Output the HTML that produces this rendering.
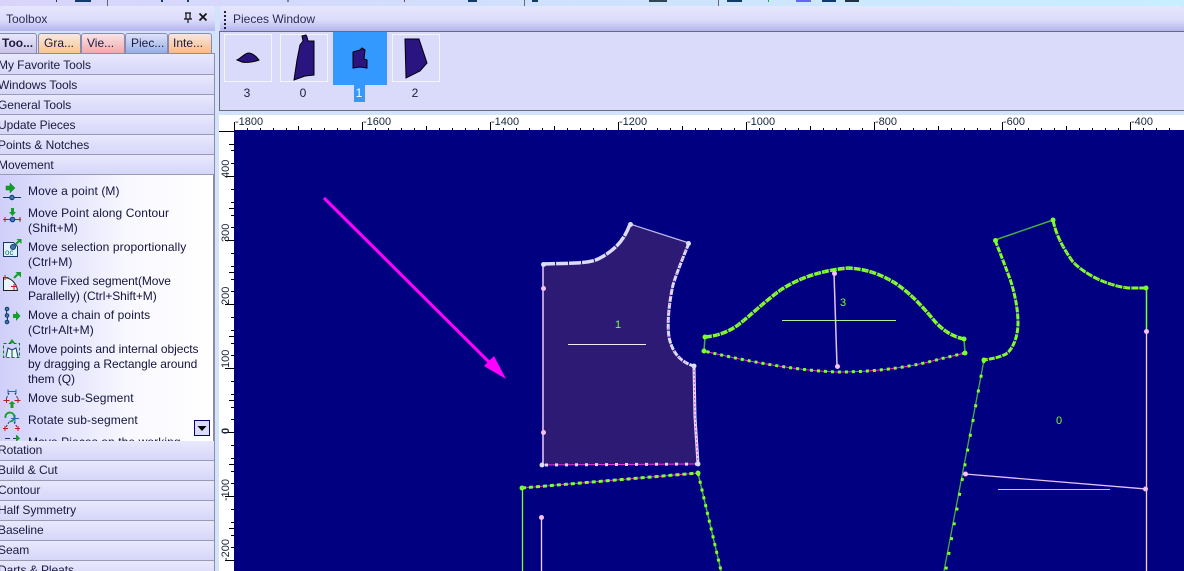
<!DOCTYPE html>
<html>
<head>
<meta charset="utf-8">
<style>
html,body{margin:0;padding:0;width:1184px;height:571px;overflow:hidden;background:#d3e3fb;}
body{position:relative;font-family:"Liberation Sans",sans-serif;font-size:12px;color:#1a1a40;}
.a{position:absolute;white-space:nowrap;}
#strip{left:0;top:0;width:1184px;height:6px;background:linear-gradient(90deg,#d9d3fb,#cfe2fd 50%,#c8eeff);}
.hd{background:linear-gradient(#e6e6fe,#dcdcfb 55%,#b4b4ee);height:25px;border-radius:3px 3px 0 0;}
.tab{top:33px;border:1px solid #8a8ab0;border-bottom:0;border-radius:3px 3px 0 0;line-height:19px;padding-left:5px;box-sizing:border-box;height:20px;}
.sec{left:-3px;width:217px;height:20px;box-sizing:border-box;padding-left:1px;line-height:21px;background:linear-gradient(#e8e8fe,#d6d6f8);border-bottom:1px solid #9a9ab4;overflow:hidden;letter-spacing:-0.05px;}
.low{line-height:19px;}
.it{left:28px;line-height:15px;color:#14143c;letter-spacing:0.1px;}
.pl{top:86px;line-height:15px;font-size:12px;text-align:center;}
.th{top:34px;width:46px;height:46px;border:1px solid #f4f4ff;}
</style>
</head>
<body>
<div class="a" id="strip"></div>
<svg class="a" style="left:0;top:0" width="1184" height="6">
<g fill="#123a6a">
<rect x="56" y="0" width="1" height="2"/><rect x="75" y="0" width="16" height="2"/><rect x="107" y="0" width="1" height="6" fill="#667"/><rect x="161" y="0" width="2" height="2"/><rect x="187" y="0" width="2" height="2"/><rect x="287" y="0" width="2" height="2" fill="#68a"/><rect x="404" y="0" width="1" height="2" fill="#843"/><rect x="468" y="0" width="9" height="2"/><rect x="524" y="0" width="1" height="6" fill="#667"/><rect x="532" y="0" width="6" height="2"/><rect x="649" y="0" width="18" height="2" fill="#345"/><rect x="718" y="0" width="1" height="6" fill="#667"/><rect x="727" y="0" width="15" height="2"/><rect x="768" y="0" width="1" height="2" fill="#2a2"/><rect x="796" y="0" width="15" height="2" fill="#66e"/><rect x="822" y="0" width="14" height="2"/><rect x="845" y="0" width="14" height="2" fill="#234"/>
</g>
</svg>

<!-- Toolbox -->
<div class="a" style="left:0;top:31px;width:215px;height:540px;background:#d3e3fb"></div>
<div class="a hd" style="left:0;top:6px;width:215px;"></div>
<div class="a" style="left:6px;top:12px;line-height:14px;color:#2a2a55">Toolbox</div>
<svg class="a" style="left:180px;top:10px" width="32" height="16">
<path d="M5 3h6M6 3v6M10 3v6M4 9h8M8 9v4" stroke="#111" stroke-width="1.2" fill="none"/>
<path d="M19.500 3.500l7 7M26.500 3.500l-7 7" stroke="#111" stroke-width="1.700" fill="none"/>
</svg>
<div class="a tab" style="left:-3px;top:33px;width:40px;background:linear-gradient(#e8e6fb,#c9c0e8);font-weight:bold;padding-left:4px;height:21px">Too...</div>
<div class="a tab" style="left:38px;width:43px;background:linear-gradient(#f8e8e0,#f9c58e)">Gra...</div>
<div class="a tab" style="left:81px;width:44px;background:linear-gradient(#f8e4e8,#f2a9a9)">Vie...</div>
<div class="a tab" style="left:125px;width:43px;background:linear-gradient(#dfe2fa,#94aee6);padding-left:5px">Piec...</div>
<div class="a tab" style="left:168px;width:44px;background:linear-gradient(#f8e6e0,#f9bb84);padding-left:4px">Inte...</div>
<div class="a" style="left:0;top:53px;width:215px;height:518px;background:#c9c9e4;border-top:1px solid #8c8ca6;border-right:2px solid #8c8ca6;box-sizing:border-box"></div>
<div class="a" style="left:0;top:175px;width:213px;height:266px;background:linear-gradient(90deg,#cfcffa,#f8f8ff 60%,#fff);overflow:hidden"></div>

<div class="a sec" style="top:54px;height:21px;line-height:23px">My Favorite Tools</div>
<div class="a sec" style="top:75px">Windows Tools</div>
<div class="a sec" style="top:95px">General Tools</div>
<div class="a sec" style="top:115px">Update Pieces</div>
<div class="a sec" style="top:135px">Points &amp; Notches</div>
<div class="a sec" style="top:155px">Movement</div>

<div class="a it" style="top:184px">Move a point (M)</div>
<div class="a it" style="top:206px">Move Point along Contour<br>(Shift+M)</div>
<div class="a it" style="top:240px">Move selection proportionally<br>(Ctrl+M)</div>
<div class="a it" style="top:274px;letter-spacing:-0.08px">Move Fixed segment(Move<br>Parallelly) (Ctrl+Shift+M)</div>
<div class="a it" style="top:308px">Move a chain of points<br>(Ctrl+Alt+M)</div>
<div class="a it" style="top:342px;letter-spacing:-0.05px">Move points and internal objects<br>by dragging a Rectangle around<br>them (Q)</div>
<div class="a it" style="top:391px">Move sub-Segment</div>
<div class="a it" style="top:413px">Rotate sub-segment</div>
<div class="a it" style="top:435px;height:6px;overflow:hidden">Move Pieces on the working</div>

<svg class="a" style="left:0;top:175px" width="28" height="266">
<!-- move a point -->
<path d="M6 11h4V8l5 5-5 5v-3H6z" fill="#12a028" stroke="#0a7a1a" stroke-width=".5"/>
<path d="M3 22.500h18" stroke="#123a6a"/><circle cx="12" cy="22.500" r="2.200" fill="#3878b8" stroke="#123a6a"/>
<!-- along contour -->
<path d="M11 33h3v4h2l-3.500 4-3.500-4h2z" fill="#12a028"/>
<path d="M3 44.500h18M5 42v5M20 42v5" stroke="#c01818"/><circle cx="12.500" cy="44.500" r="2.300" fill="#3878b8" stroke="#123a6a"/>
<!-- proportional -->
<path d="M3.500 67.500h10l4 4v10h-14z" fill="#e4f0fc" stroke="#123a6a"/>
<circle cx="13" cy="72" r="2.500" fill="#3878b8" stroke="#123a6a"/><path d="M16 69l3-3" stroke="#12a028" stroke-width="2"/><path d="M16.500 64h5v5z" fill="#12a028"/>
<text x="5" y="80" font-family="Liberation Sans" font-size="8" fill="#0a7a6a">oc</text>
<!-- fixed -->
<path d="M3.500 102.500c7 0 13 5 14 13h-14z" fill="#eef4fc" stroke="#222"/><path d="M3.500 102.500h5M5 100v5M11 111.500h6M14 109v6" stroke="#c01818"/>
<path d="M14 103l4-4" stroke="#12a028" stroke-width="2"/><path d="M15.500 97h5.500v5.500z" fill="#12a028"/>
<!-- chain -->
<path d="M7 134c-2 5 2 9 0 13" stroke="#123a6a" fill="none"/>
<circle cx="7" cy="134" r="1.800" fill="#3878b8" stroke="#123a6a"/><circle cx="7" cy="140.500" r="1.800" fill="#3878b8" stroke="#123a6a"/><circle cx="7" cy="147" r="1.800" fill="#3878b8" stroke="#123a6a"/>
<path d="M13 139h3v-3l4.500 5-4.500 5v-3h-3z" fill="#12a028"/>
<!-- rectangle -->
<rect x="3.500" y="168.500" width="16" height="14" fill="none" stroke="#0a7a1a" stroke-dasharray="3 2"/>
<path d="M6 182l2-9 4 2 4-2 2 9M12 175v7" fill="#eef4fc" stroke="#123a6a"/><path d="M12 164l3 4h-6z" fill="#12a028"/>
<!-- sub segment -->
<path d="M8 216.500h8M8 214.500v4M16 214.500v4" stroke="#1a6ad0"/>
<path d="M3.500 225.500h6M6.500 223v5M14.500 225.500h6M18 223v5" stroke="#c01818"/>
<path d="M9 218l-3 6M15 218l3 6" stroke="#123a6a" stroke-dasharray="2 1.500"/>
<path d="M12 226l3.500 3h-2v4h-3v-4h-2z" fill="#12a028"/>
<!-- rotate -->
<path d="M5.500 243a4.500 4.500 0 1 1 4 3.500" fill="none" stroke="#12a028" stroke-width="1.800"/>
<path d="M15 240v8M11 243.500h8" stroke="#1a6ad0"/>
<path d="M3 253.500h5M5 251v5M15 253.500h5M18 251v5" stroke="#c01818"/>
<path d="M9 247l-3 5M14 247l3 5" stroke="#123a6a" stroke-dasharray="2 1.500"/>
<path d="M5 263.500h5M13 263.500h3" stroke="#123a6a"/><path d="M16 260h1l3 3.500-3 2.500h-1z" fill="#12a028"/>
</svg>
<div class="a" style="left:194px;top:420px;width:14px;height:14px;border:1px solid #000080;background:#dcdcfa"></div>
<svg class="a" style="left:194px;top:420px" width="16" height="16"><path d="M3.500 6h9l-4.500 5z" fill="#000"/></svg>

<div class="a sec low" style="top:441px">Rotation</div>
<div class="a sec low" style="top:461px">Build &amp; Cut</div>
<div class="a sec low" style="top:481px">Contour</div>
<div class="a sec low" style="top:501px">Half Symmetry</div>
<div class="a sec low" style="top:521px">Baseline</div>
<div class="a sec low" style="top:541px">Seam</div>
<div class="a sec low" style="top:561px">Darts &amp; Pleats</div>

<!-- Pieces window -->
<div class="a hd" style="left:220px;top:6px;width:964px;"></div>
<svg class="a" style="left:224px;top:11px" width="3" height="18"><g fill="#223"><rect x="0" y="0" width="2" height="2"/><rect x="0" y="4" width="2" height="2"/><rect x="0" y="8" width="2" height="2"/><rect x="0" y="12" width="2" height="2"/><rect x="0" y="16" width="2" height="2"/></g></svg>
<div class="a" style="left:233px;top:12px;line-height:14px;color:#2a2a55">Pieces Window</div>
<div class="a" style="left:219px;top:31px;width:965px;height:80px;box-sizing:border-box;background:#dadafa;border:1px solid #6c6c78;border-right:0"></div>
<div class="a th" style="left:224px"></div>
<div class="a th" style="left:280px"></div>
<div class="a" style="left:333px;top:32px;width:54px;height:53px;background:#3399ff"></div>
<div class="a th" style="left:392px"></div>
<div class="a" style="left:354px;top:85px;width:11px;height:17px;background:#3399ff"></div>
<div class="a pl" style="left:232px;width:30px">3</div>
<div class="a pl" style="left:288px;width:30px">0</div>
<div class="a pl" style="left:344px;width:30px;color:#fff">1</div>
<div class="a pl" style="left:400px;width:30px">2</div>
<svg class="a" style="left:219px;top:31px;overflow:visible" width="230" height="60">
<g transform="translate(-219,-31)" fill="#2a1480" stroke="#000" stroke-width="1">
<path d="M237 60C241 58 244 54 248 53 252 53 256 56 259 60 254 62 246 63 242 62z"/>
<path d="M302 36L306 35 307 37 308 41 314 41 314 75 305 76 294 80 297 60 300 45 303 41z"/>
<path d="M353 52L360 50 362 48 365 50 364 59 367 60 367 68 360 67 353 68z"/>
<path d="M405 39L419 39 427 63 420 71 406 78z"/>
</g>
</svg>

<!-- rulers + canvas -->
<div class="a" style="left:219px;top:115px;width:965px;height:456px;background:#fff"></div>
<div class="a" style="left:234px;top:130px;width:950px;height:441px;background:#000080"></div>
<div class="a" style="left:234px;top:115px;width:950px;font-size:11px;line-height:14px;color:#16243c;height:14px">
<span class="a" style="left:1px">-1800</span><span class="a" style="left:129px">-1600</span><span class="a" style="left:257px">-1400</span><span class="a" style="left:385px">-1200</span><span class="a" style="left:513px">-1000</span><span class="a" style="left:641px">-800</span><span class="a" style="left:769px">-600</span><span class="a" style="left:897px">-400</span>
</div>
<svg class="a" style="left:219px;top:115px" width="965" height="456">
<path stroke="#000" stroke-width="1" fill="none" d="M15.500 7V15M143.500 7V15M271.500 7V15M399.500 7V15M527.500 7V15M655.500 7V15M783.500 7V15M911.500 7V15M79.500 11V15M207.500 11V15M335.500 11V15M463.500 11V15M591.500 11V15M719.500 11V15M847.500 11V15M28.500 13V15M41.500 13V15M54.500 13V15M67.500 13V15M92.500 13V15M105.500 13V15M118.500 13V15M131.500 13V15M156.500 13V15M169.500 13V15M182.500 13V15M195.500 13V15M220.500 13V15M233.500 13V15M246.500 13V15M259.500 13V15M284.500 13V15M297.500 13V15M310.500 13V15M323.500 13V15M348.500 13V15M361.500 13V15M374.500 13V15M387.500 13V15M412.500 13V15M425.500 13V15M438.500 13V15M451.500 13V15M476.500 13V15M489.500 13V15M502.500 13V15M515.500 13V15M540.500 13V15M553.500 13V15M566.500 13V15M579.500 13V15M604.500 13V15M617.500 13V15M630.500 13V15M643.500 13V15M668.500 13V15M681.500 13V15M694.500 13V15M707.500 13V15M732.500 13V15M745.500 13V15M758.500 13V15M771.500 13V15M796.500 13V15M809.500 13V15M822.500 13V15M835.500 13V15M860.500 13V15M873.500 13V15M886.500 13V15M899.500 13V15M924.500 13V15M937.500 13V15M950.500 13V15"/>
<path stroke="#000" fill="none" d="M0 16.500H15M6 61.500H15M6 125.500H15M6 189.500H15M6 253.500H15M6 317.500H15M6 381.500H15M6 445.500H15M10 29.500H15M10 93.500H15M10 157.500H15M10 221.500H15M10 285.500H15M10 349.500H15M10 413.500H15M12 35.500H15M12 48.500H15M12 74.500H15M12 87.500H15M12 100.500H15M12 112.500H15M12 138.500H15M12 151.500H15M12 164.500H15M12 176.500H15M12 202.500H15M12 215.500H15M12 228.500H15M12 240.500H15M12 266.500H15M12 279.500H15M12 292.500H15M12 304.500H15M12 330.500H15M12 343.500H15M12 356.500H15M12 368.500H15M12 394.500H15M12 407.500H15M12 420.500H15M12 432.500H15"/>
<g font-family="Liberation Sans" font-size="11" fill="#16243c">
<text transform="translate(10,63) rotate(-90)">400</text>
<text transform="translate(10,127) rotate(-90)">300</text>
<text transform="translate(10,190) rotate(-90)">200</text>
<text transform="translate(10,253) rotate(-90)">100</text>
<text transform="translate(10,319) rotate(-90)" font-weight="bold">0</text>
<text transform="translate(10,386) rotate(-90)">-100</text>
<text transform="translate(10,446) rotate(-90)">-200</text>
</g>
</svg>

<!-- Drawing -->
<svg class="a" style="left:0;top:0" width="1184" height="571">
<defs><clipPath id="c"><rect x="234" y="130" width="950" height="441"/></clipPath></defs>
<g clip-path="url(#c)" fill="none" stroke-linecap="butt" stroke-linejoin="round">
<!-- arrow -->
<path d="M324 198L498 371" stroke="#ff00ff" stroke-width="3"/>
<path d="M506 379L484 366 494 356z" fill="#ff00ff"/>

<!-- piece 1 -->
<path d="M543 264C570 263 590 264 600 258 617 249 625 238 630 224L689 243C682 260 676 275 673 285 669 303 667 323 669 337 672 352 680 362 694 366L695 417 698 464 542 465z" fill="#2d1a75"/>
<path d="M543 264C570 263 590 264 600 258 617 249 625 238 630 224" stroke="#dcdcf6" stroke-width="3.500" stroke-dasharray="12 1"/>
<path d="M689 243C682 260 676 275 673 285 669 303 667 323 669 337 672 352 680 362 694 366" stroke="#dcdcf6" stroke-width="3" stroke-dasharray="6 1"/>
<path d="M694 366L695 417 698 464" stroke="#dcdcf6" stroke-width="3"/>
<path d="M698 464L542 465" stroke="#ff33ee" stroke-width="1"/>
<path d="M698 464L542 465" stroke="#dcdcf6" stroke-width="3" stroke-dasharray="3 7"/>
<path d="M689 243C682 260 676 275 673 285 669 303 667 323 669 337 672 352 680 362 694 366" stroke="#ff33ee" stroke-width="1" stroke-dasharray="1 7"/>
<path d="M694 366L695 417 698 464" stroke="#ff33ee" stroke-width="1" stroke-dasharray="2 2"/>
<path d="M630 224L689 243" stroke="#bbbbee" stroke-width="1.200"/>
<path d="M543 264V465" stroke="#eec8f4" stroke-width="1.500"/>
<path d="M568 344.500H646" stroke="#f4e8fa" stroke-width="1"/>
<g fill="#dcdcf6"><circle cx="543.500" cy="264.500" r="2.500"/><circle cx="630.500" cy="224.500" r="2.500"/><circle cx="688.500" cy="243.500" r="2.500"/><circle cx="694" cy="366" r="2.500"/><circle cx="698" cy="464" r="2.500"/><circle cx="542" cy="465" r="2.500"/></g>
<g fill="#f8c0f0"><circle cx="543.500" cy="288.500" r="2.500"/><circle cx="543.500" cy="432.500" r="2.500"/></g>

<!-- piece 3 -->
<path d="M705 337C718 336 730 331 738 325 750 316 765 301 782 289 795 281 815 271 848 268 870 269 885 277 895 283 910 293 922 306 932 318 940 328 950 336 964 339" stroke="#7dff2a" stroke-width="3.500" stroke-dasharray="7 1"/>
<path d="M705 337C718 336 730 331 738 325 750 316 765 301 782 289 795 281 815 271 848 268 870 269 885 277 895 283 910 293 922 306 932 318 940 328 950 336 964 339" stroke="#ff22dd" stroke-width="1" stroke-dasharray="1 5"/>
<path d="M965 353L940 359C915 366 880 372 838 372 800 371 750 362 704 351" stroke="#ff22dd" stroke-width="1"/>
<path d="M965 353L940 359C915 366 880 372 838 372 800 371 750 362 704 351" stroke="#7dff2a" stroke-width="3" stroke-dasharray="3 4"/>
<path d="M705 337L704 351M964 339L965 353" stroke="#4aaa44" stroke-width="1.500"/>
<path d="M834 273L837 366" stroke="#e8c0f4" stroke-width="1.500"/>
<path d="M782 320.500H896" stroke="#a8f0a0" stroke-width="1"/>
<g fill="#7dff2a"><circle cx="705" cy="337" r="2.500"/><circle cx="704" cy="351" r="2.500"/><circle cx="964" cy="339" r="2.500"/><circle cx="965" cy="353" r="2.500"/></g>
<g fill="#f8c0f0"><circle cx="834.500" cy="273.500" r="2.500"/><circle cx="837.500" cy="366.500" r="2.500"/></g>

<!-- piece 0 -->
<path d="M1053 220C1056 235 1063 248 1073 262 1085 274 1105 285 1128 288L1146 288" stroke="#7dff2a" stroke-width="3" stroke-dasharray="7 1"/>
<path d="M995 240C1002 258 1008 273 1011 282 1016 298 1018 312 1018 323 1018 338 1012 350 1006 354 998 358 990 359 984 360" stroke="#7dff2a" stroke-width="3" stroke-dasharray="6 1"/>
<path d="M995 240C1002 258 1008 273 1011 282 1016 298 1018 312 1018 323 1018 338 1012 350 1006 354 998 358 990 359 984 360M1053 220C1056 235 1063 248 1073 262 1085 274 1105 285 1128 288L1146 288" stroke="#ff22dd" stroke-width="1" stroke-dasharray="1 6"/>
<path d="M1053 220L995 240" stroke="#4aaa44" stroke-width="1.500"/>
<path d="M984 360L944 571" stroke="#4aaa44" stroke-width="1.300"/>
<path d="M984 360L944 580" stroke="#7dff2a" stroke-width="3" stroke-dasharray="3 12"/>
<path d="M1146.500 288V331" stroke="#7dff2a" stroke-width="1.500"/>
<path d="M1146.500 331V571" stroke="#ffc8ff" stroke-width="1.300"/>
<path d="M965 474L1146 489" stroke="#e8c0f4" stroke-width="1.300"/>
<path d="M998 489.500H1110" stroke="#90f090" stroke-width="1"/>
<g fill="#7dff2a"><circle cx="1053" cy="220" r="2.500"/><circle cx="995.500" cy="240.500" r="2.500"/><circle cx="1146" cy="288" r="2.500"/><circle cx="984" cy="360" r="2.500"/></g>
<g fill="#f8c0f0"><circle cx="1146.500" cy="331.500" r="2.500"/><circle cx="965.500" cy="474" r="2.500"/><circle cx="1145.500" cy="489" r="2.500"/></g>

<!-- piece 2 -->
<path d="M522 488L698 473" stroke="#ff22dd" stroke-width="1"/>
<path d="M522 488L698 473" stroke="#7dff2a" stroke-width="3" stroke-dasharray="4 3"/>
<path d="M698 473L722 575" stroke="#4aaa44" stroke-width="1.500"/>
<path d="M698 473L722 575" stroke="#7dff2a" stroke-width="3" stroke-dasharray="3 5"/>
<path d="M522.500 488V571" stroke="#7dff2a" stroke-width="1.300"/>
<path d="M541.500 517V571" stroke="#ffc8ff" stroke-width="1.300"/>
<g fill="#7dff2a"><circle cx="522" cy="488" r="2.500"/><circle cx="698" cy="473" r="2.500"/></g>
<circle cx="541.500" cy="517.500" r="2.500" fill="#f8c0f0"/>

<g font-family="Liberation Sans" font-size="11" fill="#7dff2a" stroke="none">
<text x="615" y="328">1</text><text x="840" y="306">3</text><text x="1056" y="424">0</text>
</g>
</g>
</svg>
</body>
</html>
